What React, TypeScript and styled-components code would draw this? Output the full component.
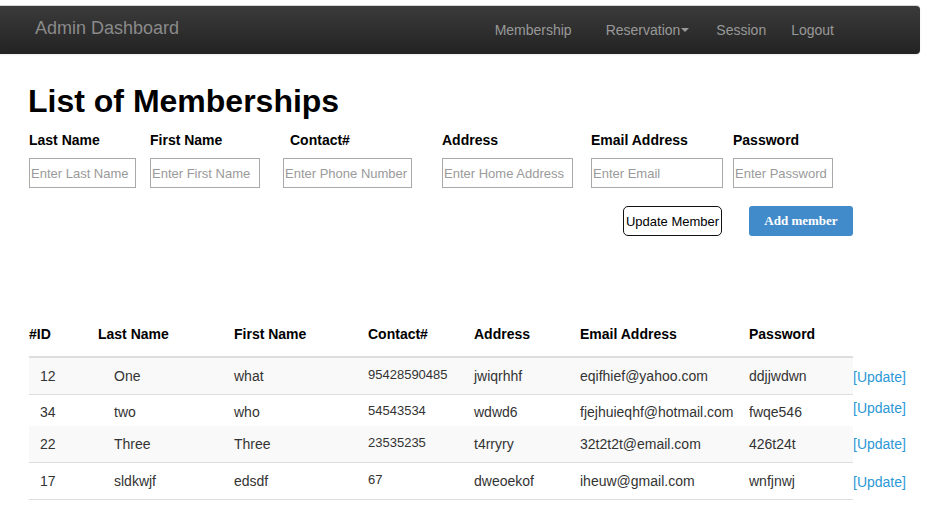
import React from "react";
import styled, { createGlobalStyle } from "styled-components";

const GlobalStyle = createGlobalStyle`
  html, body { margin: 0; padding: 0; background: #fff; }
  body { font-family: "Liberation Sans", Arial, sans-serif; font-size: 14px; color: #333; }
  * { box-sizing: border-box; }
`;

const Navbar = styled.header`
  margin-top: 5px;
  width: 920px;
  height: 49px;
  border-top: 1px solid #d6d6d6;
  border-radius: 0 4px 4px 0;
  background: linear-gradient(#3b3b3b, #232323);
  box-shadow: 0 1px 2px rgba(0, 0, 0, 0.08);
  display: flex;
  align-items: flex-start;
`;

const Brand = styled.a`
  display: block;
  padding: 12px 0 0 35px;
  font-size: 18px;
  line-height: 20px;
  color: #8a8a8a;
  text-decoration: none;
`;

const NavList = styled.ul`
  list-style: none;
  margin: 0 0 0 auto;
  padding: 14px 86px 0 0;
  display: flex;
`;

const NavItem = styled.li<{ $gap: number }>`
  margin-left: ${(p) => p.$gap}px;
  display: flex;
  align-items: center;
  font-size: 14px;
  line-height: 20px;
  color: #999;
`;

const Caret = styled.span`
  display: inline-block;
  width: 0;
  height: 0;
  margin-left: 1px;
  border-left: 4px solid transparent;
  border-right: 4px solid transparent;
  border-top: 4px solid #999;
`;

const Main = styled.main`
  padding: 29px 0 0 29px;
`;

const Title = styled.h1`
  margin: 0 0 0 -1px;
  font-size: 32px;
  line-height: 36px;
  font-weight: bold;
  color: #000;
`;

const FormGrid = styled.div`
  margin-top: 11px;
  display: grid;
  grid-template-columns: 121px 133px 159px 149px 142px 100px;
`;

const Field = styled.div`
  display: flex;
  flex-direction: column;
`;

const Label = styled.label<{ $indent?: number }>`
  padding-left: ${(p) => p.$indent ?? 0}px;
  font-size: 14px;
  line-height: 20px;
  font-weight: bold;
  color: #000;
`;

const Input = styled.input<{ $w: number }>`
  margin-top: 8px;
  width: ${(p) => p.$w}px;
  height: 30px;
  padding: 0 1px;
  border: 1px solid #a9a9a9;
  font-family: "Liberation Sans", Arial, sans-serif;
  font-size: 13px;
  color: #333;
  &::placeholder { color: #9a9a9a; }
`;

const ButtonRow = styled.div`
  margin-top: 18px;
  width: 824px;
  display: flex;
  justify-content: flex-end;
  gap: 27px;
`;

const OutlineButton = styled.button`
  width: 99px;
  height: 30px;
  padding: 0;
  background: #fff;
  border: 1px solid #111;
  border-radius: 5px;
  font-family: "Liberation Sans", Arial, sans-serif;
  font-size: 13px;
  color: #000;
`;

const PrimaryButton = styled.button`
  width: 104px;
  height: 30px;
  padding: 0;
  background: #428bca;
  border: none;
  border-radius: 3px;
  font-family: "Liberation Serif", "Times New Roman", serif;
  font-weight: bold;
  font-size: 13px;
  color: #fff;
`;

const Table = styled.div`
  margin-top: 88px;
  display: flex;
  flex-direction: column;
`;

const cols = "69px 136px 134px 106px 106px 169px 104px";

const HeadRow = styled.div`
  width: 824px;
  height: 34px;
  display: grid;
  grid-template-columns: ${cols};
  border-bottom: 2px solid #ddd;
`;

const HeadCell = styled.div`
  font-size: 14px;
  line-height: 20px;
  font-weight: bold;
  color: #000;
`;

const Row = styled.div`
  display: flex;
`;

const RowMain = styled.div<{ $h: number; $striped?: boolean; $border?: boolean }>`
  width: 824px;
  height: ${(p) => p.$h}px;
  display: grid;
  grid-template-columns: ${cols};
  background: ${(p) => (p.$striped ? "#f9f9f9" : "#fff")};
  border-bottom: ${(p) => (p.$border ? "1px solid #ddd" : "none")};
`;

const Cell = styled.div<{ $top: number; $indent?: number; $small?: boolean }>`
  padding-top: ${(p) => p.$top - (p.$small ? 1 : 0)}px;
  padding-left: ${(p) => p.$indent ?? 0}px;
  font-size: ${(p) => (p.$small ? 13 : 14)}px;
  line-height: 20px;
  color: #333;
  white-space: nowrap;
`;

const Action = styled.a<{ $top: number }>`
  display: block;
  padding-top: ${(p) => p.$top}px;
  font-size: 14px;
  line-height: 20px;
  color: #2c98d6;
  text-decoration: none;
`;

type Member = {
  id: string;
  last: string;
  first: string;
  contact: string;
  address: string;
  email: string;
  password: string;
  h: number;
  striped: boolean;
  border: boolean;
  top: number;
  actionTop: number;
};

const members: Member[] = [
  { id: "12", last: "One", first: "what", contact: "95428590485", address: "jwiqrhhf", email: "eqifhief@yahoo.com", password: "ddjjwdwn", h: 37, striped: true, border: true, top: 8, actionTop: 9 },
  { id: "34", last: "two", first: "who", contact: "54543534", address: "wdwd6", email: "fjejhuieqhf@hotmail.com", password: "fwqe546", h: 31, striped: false, border: false, top: 7, actionTop: 3 },
  { id: "22", last: "Three", first: "Three", contact: "23535235", address: "t4rryry", email: "32t2t2t@email.com", password: "426t24t", h: 37, striped: true, border: true, top: 8, actionTop: 8 },
  { id: "17", last: "sldkwjf", first: "edsdf", contact: "67", address: "dweoekof", email: "iheuw@gmail.com", password: "wnfjnwj", h: 37, striped: false, border: true, top: 8, actionTop: 9 },
];

const fields = [
  { label: "Last Name", placeholder: "Enter Last Name", w: 107 },
  { label: "First Name", placeholder: "Enter First Name", w: 110 },
  { label: "Contact#", placeholder: "Enter Phone Number", w: 129, indent: 7 },
  { label: "Address", placeholder: "Enter Home Address", w: 131 },
  { label: "Email Address", placeholder: "Enter Email", w: 132 },
  { label: "Password", placeholder: "Enter Password", w: 100 },
];

const headers = ["#ID", "Last Name", "First Name", "Contact#", "Address", "Email Address", "Password"];

export default function App() {
  return (
    <>
      <GlobalStyle />
      <Navbar>
        <Brand href="#">Admin Dashboard</Brand>
        <NavList>
          <NavItem $gap={0}>Membership</NavItem>
          <NavItem $gap={34}>
            Reservation
            <Caret />
          </NavItem>
          <NavItem $gap={27}>Session</NavItem>
          <NavItem $gap={25}>Logout</NavItem>
        </NavList>
      </Navbar>
      <Main>
        <Title>List of Memberships</Title>
        <FormGrid>
          {fields.map((f) => (
            <Field key={f.label}>
              <Label $indent={f.indent}>{f.label}</Label>
              <Input $w={f.w} placeholder={f.placeholder} />
            </Field>
          ))}
        </FormGrid>
        <ButtonRow>
          <OutlineButton>Update Member</OutlineButton>
          <PrimaryButton>Add member</PrimaryButton>
        </ButtonRow>
        <Table>
          <HeadRow>
            {headers.map((h) => (
              <HeadCell key={h}>{h}</HeadCell>
            ))}
          </HeadRow>
          {members.map((m) => (
            <Row key={m.id}>
              <RowMain $h={m.h} $striped={m.striped} $border={m.border}>
                <Cell $top={m.top} $indent={11}>{m.id}</Cell>
                <Cell $top={m.top} $indent={16}>{m.last}</Cell>
                <Cell $top={m.top}>{m.first}</Cell>
                <Cell $top={m.top} $small>{m.contact}</Cell>
                <Cell $top={m.top}>{m.address}</Cell>
                <Cell $top={m.top}>{m.email}</Cell>
                <Cell $top={m.top}>{m.password}</Cell>
              </RowMain>
              <Action href="#" $top={m.actionTop}>[Update]</Action>
            </Row>
          ))}
        </Table>
      </Main>
    </>
  );
}
